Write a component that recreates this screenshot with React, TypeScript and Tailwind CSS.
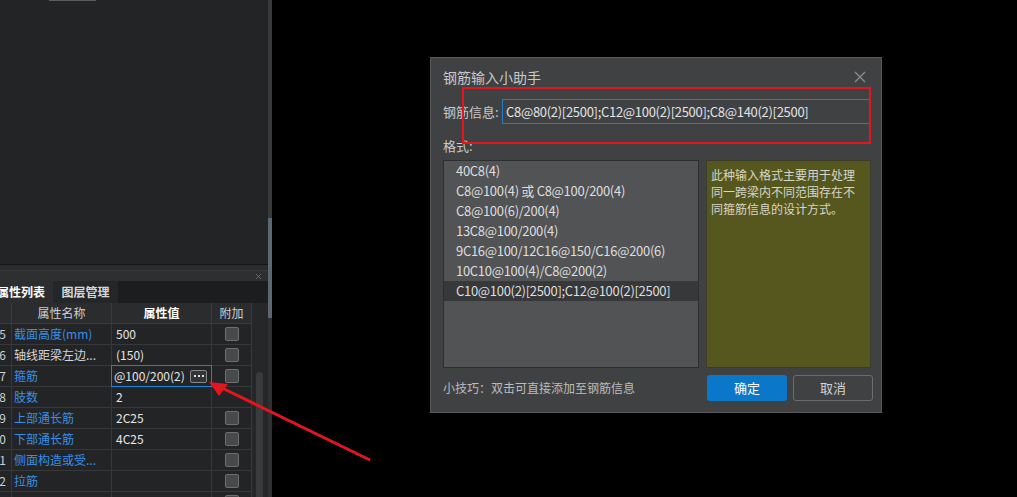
import { X } from "lucide-react";

type Row = {
  n: string;
  name: string;
  blue: boolean;
  value: string;
  check: boolean;
  edit?: boolean;
};

const rows: Row[] = [
  { n: "5", name: "截面高度(mm)", blue: true, value: "500", check: true },
  { n: "6", name: "轴线距梁左边...", blue: false, value: "(150)", check: true },
  { n: "7", name: "箍筋", blue: true, value: "@100/200(2)", check: true, edit: true },
  { n: "8", name: "肢数", blue: true, value: "2", check: false },
  { n: "9", name: "上部通长筋", blue: true, value: "2C25", check: true },
  { n: "10", name: "下部通长筋", blue: true, value: "4C25", check: true },
  { n: "11", name: "侧面构造或受...", blue: true, value: "", check: true },
  { n: "12", name: "拉筋", blue: true, value: "", check: true },
  { n: "13", name: "", blue: true, value: "", check: true },
];

const formats = [
  "40C8(4)",
  "C8@100(4) 或 C8@100/200(4)",
  "C8@100(6)/200(4)",
  "13C8@100/200(4)",
  "9C16@100/12C16@150/C16@200(6)",
  "10C10@100(4)/C8@200(2)",
  "C10@100(2)[2500];C12@100(2)[2500]",
];

function Checkbox() {
  return <div className="h-[14px] w-[14px] rounded-[2px] border border-[#6e6f70] bg-[#48494b]" />;
}

function PropertyPanel() {
  return (
    <div className="flex w-[268px] shrink-0 flex-col bg-[#232426]">
      {/* empty drawing area above */}
      <div className="h-[264px] shrink-0">
        <div className="ml-[49px] h-px w-[47px] bg-[#5c5d5e]" />
      </div>
      <div className="h-px shrink-0 bg-[#161718]" />
      <div className="h-[5px] shrink-0 bg-[#2a2b2d]" />
      <div className="flex h-[11px] shrink-0 items-center justify-end border-t border-[#3a3b3d] bg-[#2e2f31] pr-[5px]">
        <X className="h-[9px] w-[9px] text-[#77787a]" strokeWidth={2} />
      </div>

      {/* tabs */}
      <div className="flex h-[22px] shrink-0 bg-[#1c1d1f] text-[12px] font-bold">
        <div className="flex w-[53px] items-center overflow-hidden bg-[#2c2d2f] text-white">
          <span className="-ml-[3px] whitespace-nowrap">属性列表</span>
        </div>
        <div className="flex w-[65px] items-center justify-center bg-[#252628] text-[#d8d8d8]">图层管理</div>
      </div>

      <div className="flex shrink-0">
        <div className="w-[252px] text-[12px]">
          {/* header */}
          <div className="grid h-[21px] grid-cols-[12px_100px_100px_40px] bg-[#2b2c2e] text-[#cfcfcf]">
            <div className="border-r border-b border-[#3a3b3d]" />
            <div className="flex items-center justify-center border-r border-b border-[#3a3b3d]">属性名称</div>
            <div className="flex items-center justify-center border-r border-b border-[#3a3b3d] font-bold text-white">属性值</div>
            <div className="flex items-center justify-center border-r border-b border-[#3a3b3d]">附加</div>
          </div>
          {rows.map((r) => (
            <div key={r.n} className="grid h-[21px] grid-cols-[12px_100px_100px_40px]">
              <div className="flex items-center justify-end overflow-hidden border-r border-b border-[#37383a] pr-[5px] text-[#d0d0d0]">
                <span className="whitespace-nowrap">{r.n}</span>
              </div>
              <div
                className={
                  "flex items-center overflow-hidden whitespace-nowrap border-r border-b border-[#37383a] pl-[2px] " +
                  (r.blue ? "text-[#3a8fe3]" : "text-[#d6d6d6]")
                }
              >
                {r.name}
              </div>
              <div className="relative flex items-center border-r border-b border-[#37383a] pl-[4px] text-[#e6e6e6]">
                {r.edit ? (
                  <div className="absolute -top-px -left-px -right-px -bottom-px flex items-center justify-between border border-[#1a84d6] bg-[#232426] pl-[2px] pr-[4px]">
                    <span>{r.value}</span>
                    <span className="flex h-[13px] w-[17px] items-center justify-center gap-[2px] rounded-[2px] border border-[#85868a] bg-[#333436]">
                      <span className="h-[2px] w-[2px] bg-[#e0e0e0]" />
                      <span className="h-[2px] w-[2px] bg-[#e0e0e0]" />
                      <span className="h-[2px] w-[2px] bg-[#e0e0e0]" />
                    </span>
                  </div>
                ) : (
                  r.value
                )}
              </div>
              <div className="flex items-center justify-center border-r border-b border-[#37383a]">
                {r.check && <Checkbox />}
              </div>
            </div>
          ))}
        </div>
        {/* table scroll track */}
        <div className="flex w-[16px] flex-col bg-[#262729] pt-[69px]">
          <div className="ml-[4px] h-[200px] w-[7px] rounded-t-[4px] bg-[#3a3b3d]" />
        </div>
      </div>
    </div>
  );
}

function Dialog() {
  return (
    <div className="flex h-[356px] w-[452px] flex-col border border-[#58595b] bg-[#3f4142] pl-[12px] pr-[10px] text-[13px] text-[#d2d2d2]">
      <div className="flex h-[38px] items-center justify-between">
        <span className="text-[14px] text-[#c9c9c9]">钢筋输入小助手</span>
        <svg width="12" height="12" viewBox="0 0 12 12" className="mr-[5px]">
          <path d="M1 1L11 11M11 1L1 11" stroke="#8c8d8e" strokeWidth="1.3" />
        </svg>
      </div>

      <div className="mt-[3px] flex h-[25px] items-center">
        <span className="w-[59px] shrink-0 text-[#cacaca]">钢筋信息:</span>
        <div className="flex h-full flex-1 items-center border border-[#1c7fd0] bg-[#3f4142] pl-[3px] tracking-[-0.3px] text-[#e4e4e4]">
          C8@80(2)[2500];C12@100(2)[2500];C8@140(2)[2500]
        </div>
      </div>

      <div className="flex h-[36px] items-end pb-[5px] leading-[18px] text-[#cacaca]">格式:</div>

      <div className="flex h-[208px] gap-[7px]">
        <div className="w-[256px] border border-[#2d2e30] bg-[#525355] tracking-[-0.3px] text-[#dedede]">
          {formats.map((f, i) => (
            <div
              key={f}
              className={
                "flex h-[20px] items-center whitespace-nowrap pl-[12px] " + (i === 6 ? "bg-[#37383a]" : "")
              }
            >
              {f}
            </div>
          ))}
        </div>
        <div className="flex-1 border border-[#3b3c2a] bg-[#56561f] pl-[4px] pt-[5px] text-[12px] leading-[17px] text-[#d6d6c8]">
          <div>此种输入格式主要用于处理</div>
          <div>同一跨梁内不同范围存在不</div>
          <div>同箍筋信息的设计方式。</div>
        </div>
      </div>

      <div className="mt-[7px] -mr-[2px] flex h-[26px] items-center">
        <span className="flex-1 text-[12px] text-[#bdbdbd]">小技巧：双击可直接添加至钢筋信息</span>
        <button className="h-full w-[80px] rounded-[3px] bg-[#0a77c9] text-white">确定</button>
        <button className="ml-[6px] h-full w-[80px] rounded-[3px] border border-[#6b6c6e] text-[#d4d4d4]">取消</button>
      </div>
    </div>
  );
}

export default function App() {
  return (
    <div className="relative flex h-[497px] w-[1017px] overflow-hidden bg-black font-['Noto_Sans_CJK_SC',sans-serif]">
      <PropertyPanel />

      {/* panel scrollbar */}
      <div className="flex w-[4px] shrink-0 flex-col bg-[#2f3032]">
        <div className="h-[218px] shrink-0 bg-[#393a3c]" />
        <div className="h-[100px] shrink-0 bg-[#5d6774]" />
      </div>

      <div className="flex-1 pl-[158px] pt-[57px]">
        <Dialog />
      </div>

      {/* red annotations */}
      <svg className="pointer-events-none absolute left-0 top-0" width="1017" height="497">
        <rect x="463" y="88" width="407" height="55" fill="none" stroke="#e3161f" strokeWidth="2" />
        <line x1="370" y1="460" x2="220" y2="387" stroke="#e3161f" strokeWidth="3" />
        <polygon points="209,382 219,396 228,384" fill="#e3161f" />
      </svg>
    </div>
  );
}
